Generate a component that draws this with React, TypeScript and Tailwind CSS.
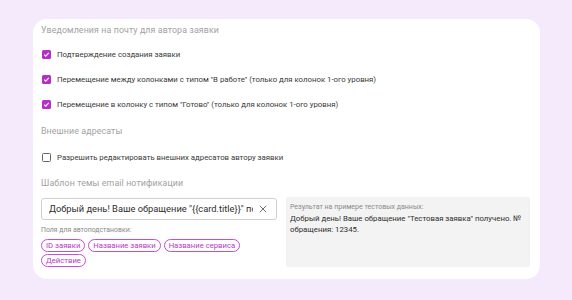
import React from "react";

const Check = ({ checked }: { checked: boolean }) =>
  checked ? (
    <div className="w-[9px] h-[9px] rounded-[1.5px] bg-[#b62fc4] flex items-center justify-center shrink-0">
      <svg width="7" height="7" viewBox="0 0 10 10">
        <path d="M1.8 5.2 L4 7.3 L8.3 2.8" stroke="white" strokeWidth="1.6" fill="none" />
      </svg>
    </div>
  ) : (
    <div className="w-[9px] h-[9px] rounded-[1.5px] border-[1.2px] border-[#666] shrink-0" />
  );

const Row = ({ checked, label }: { checked: boolean; label: string }) => (
  <div className="h-[25px] flex items-center gap-[6px] pl-[1px]">
    <Check checked={checked} />
    <span className="text-[7.8px] text-[#3a3a3a]">{label}</span>
  </div>
);

const Chip = ({ label }: { label: string }) => (
  <span className="h-[13px] px-[4px] rounded-full border border-[#c44fcf] text-[#b738c4] text-[7.7px] flex items-center leading-none">
    {label}
  </span>
);

export default function App() {
  return (
    <div
      className="w-[572px] h-[300px] bg-[#f4eafc] pt-[19px] pl-[33px]"
      style={{ fontFamily: "Roboto, 'Noto Sans', sans-serif" }}
    >
      <div className="w-[507px] h-[260px] bg-white rounded-[14px] pl-[8px] pr-[10px] pt-[5px]">
        <div className="h-[14px] flex items-center text-[8.8px] text-[#a2a2a2] tracking-[0.12px] font-normal">
          Уведомления на почту для автора заявки
        </div>
        <div className="mt-[4px]">
          <Row checked label="Подтверждение создания заявки" />
          <Row checked label={'Перемещение между колонками с типом "В работе" (только для колонок 1-ого уровня)'} />
          <Row checked label={'Перемещение в колонку с типом "Готово" (только для колонок 1-ого уровня)'} />
        </div>
        <div className="mt-[8px] h-[14px] flex items-center text-[8.8px] text-[#a2a2a2] tracking-[0.12px]">
          Внешние адресаты
        </div>
        <div className="mt-[6px]">
          <div className="h-[25px] flex items-center gap-[6px] pl-[1px]">
            <Check checked={false} />
            <span className="text-[7.8px] text-[#3a3a3a]">Разрешить редактировать внешних адресатов автору заявки</span>
          </div>
        </div>
        <div className="mt-[7px] h-[14px] flex items-center text-[8.8px] text-[#a2a2a2] tracking-[0.12px]">
          Шаблон темы email нотификации
        </div>
        <div className="mt-[7px] flex gap-[9px]">
          <div className="w-[236px]">
            <div className="h-[22px] border border-[#cfcfcf] rounded-[3px] flex items-center pl-[7px] pr-[9px] gap-[6px]">
              <span className="flex-1 overflow-hidden whitespace-nowrap text-[9.3px] text-[#2e2e2e]">
                Добрый день! Ваше обращение "{"{{"}card.title{"}}"}" получено. № обращения: {"{{"}card.id{"}}"}
              </span>
              <svg width="8" height="8" viewBox="0 0 10 10" className="shrink-0">
                <path d="M1 1 L9 9 M9 1 L1 9" stroke="#666" strokeWidth="1.2" />
              </svg>
            </div>
            <div className="mt-[5px] text-[6.9px] text-[#8a8a8a] leading-[10px]">Поля для автоподстановки:</div>
            <div className="mt-[4px] flex flex-wrap gap-x-[3px] gap-y-[2px]">
              <Chip label="ID заявки" />
              <Chip label="Название заявки" />
              <Chip label="Название сервиса" />
              <Chip label="Действие" />
            </div>
          </div>
          <div className="w-[244px] h-[70px] -mt-[1px] bg-[#f3f3f3] rounded-[3px] px-[4px] pt-[5px]">
            <div className="text-[7px] text-[#8a8a8a] leading-[10px]">Результат на примере тестовых данных:</div>
            <div className="mt-[1px] text-[7.8px] text-[#2e2e2e] leading-[11px]">
              Добрый день! Ваше обращение "Тестовая заявка" получено. № обращения: 12345.
            </div>
          </div>
        </div>
      </div>
    </div>
  );
}
